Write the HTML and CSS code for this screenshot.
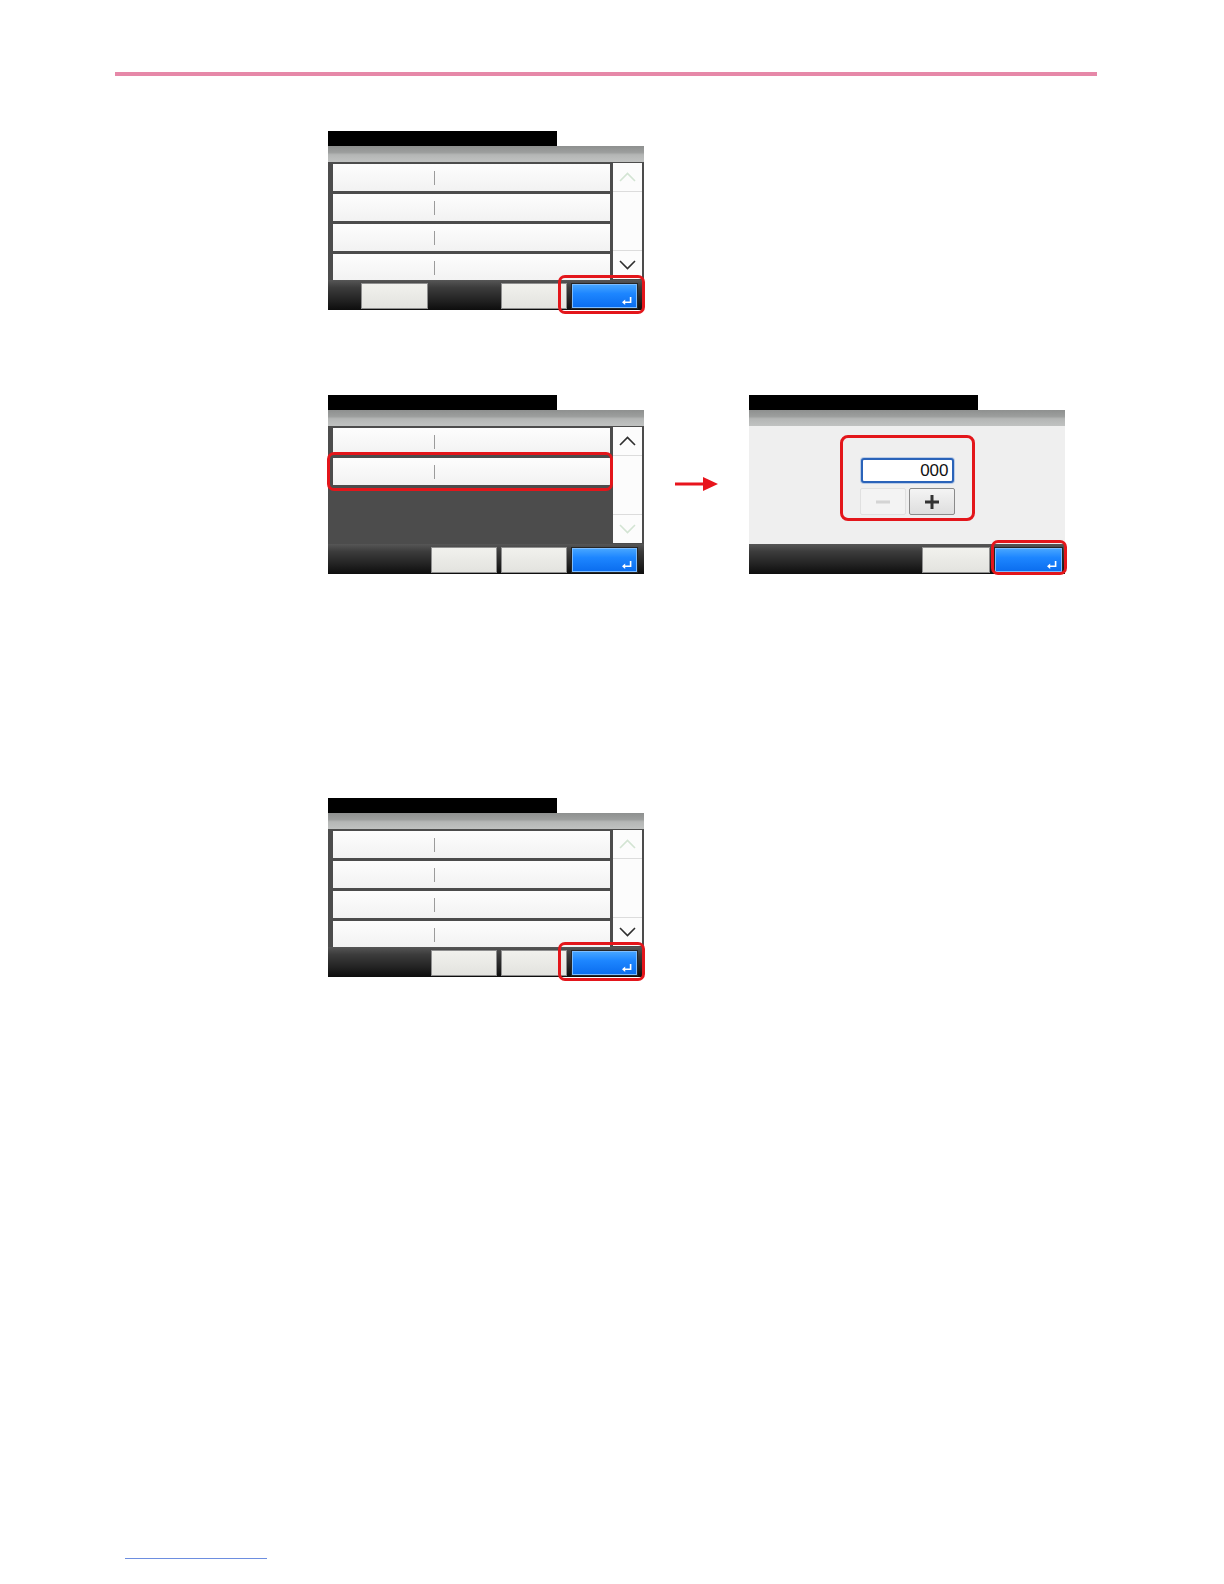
FILE: index.html
```html
<!DOCTYPE html>
<html lang="en">
<head>
<meta charset="utf-8">
<title>Panel steps</title>
<link rel="stylesheet" href="styles.css">
</head>
<body>
<div class="page">
  <div class="rule"></div>

  <!-- Figure 1 -->
  <div class="fig fig-1">
    <div class="screen">
      <div class="title"></div>
      <div class="subbar"></div>
      <div class="list">
        <div class="rows">
          <div class="row"><span class="row-key"></span><span class="row-val"></span></div>
          <div class="row"><span class="row-key"></span><span class="row-val"></span></div>
          <div class="row"><span class="row-key"></span><span class="row-val"></span></div>
          <div class="row"><span class="row-key"></span><span class="row-val"></span></div>
        </div>
        <div class="scroll">
          <div class="scroll-btn up"><svg class="chev faint" viewBox="0 0 17 10"><path d="M1 9 L8.5 1.5 L16 9"/></svg></div>
          <div class="scroll-track"></div>
          <div class="scroll-btn down"><svg class="chev" viewBox="0 0 17 10"><path d="M1 1 L8.5 8.5 L16 1"/></svg></div>
        </div>
      </div>
      <div class="bar">
        <div class="btn btn-first"></div>
        <div class="btn"></div>
        <div class="btn btn-blue"><svg class="enter" viewBox="0 0 10 8"><path d="M8.6 0 V5.2 H2.5"/><polygon points="0,5.2 3.2,2.4 3.2,8"/></svg></div>
        <div class="hl hl-bar"></div>
      </div>
    </div>
  </div>

  <!-- Figure 2 -->
  <div class="fig fig-2">
    <div class="screen">
      <div class="title"></div>
      <div class="subbar"></div>
      <div class="list">
        <div class="rows rows-open">
          <div class="row"><span class="row-key"></span><span class="row-val"></span></div>
          <div class="row"><span class="row-key"></span><span class="row-val"></span><div class="hl hl-row"></div></div>
        </div>
        <div class="scroll">
          <div class="scroll-btn up"><svg class="chev" viewBox="0 0 17 10"><path d="M1 9 L8.5 1.5 L16 9"/></svg></div>
          <div class="scroll-track"></div>
          <div class="scroll-btn down"><svg class="chev faint" viewBox="0 0 17 10"><path d="M1 1 L8.5 8.5 L16 1"/></svg></div>
        </div>
      </div>
      <div class="bar">
        <div class="btn"></div>
        <div class="btn"></div>
        <div class="btn btn-blue"><svg class="enter" viewBox="0 0 10 8"><path d="M8.6 0 V5.2 H2.5"/><polygon points="0,5.2 3.2,2.4 3.2,8"/></svg></div>
      </div>
    </div>

    <svg class="next-arrow" viewBox="0 0 43 14"><rect x="0" y="5.5" width="30" height="3"/><polygon points="28,0 43,7 28,14"/></svg>

    <div class="screen">
      <div class="title"></div>
      <div class="subbar"></div>
      <div class="panel">
        <div class="numbox">
          <div class="num-input">000</div>
          <div class="num-btns">
            <div class="num-btn num-btn-off"><svg viewBox="0 0 16 16"><rect x="1" y="6.5" width="14" height="3"/></svg></div>
            <div class="num-btn"><svg viewBox="0 0 16 16"><rect x="1" y="6.5" width="14" height="3"/><rect x="6.5" y="1" width="3" height="14"/></svg></div>
          </div>
        </div>
      </div>
      <div class="bar bar-wide">
        <div class="btn"></div>
        <div class="btn btn-blue"><svg class="enter" viewBox="0 0 10 8"><path d="M8.6 0 V5.2 H2.5"/><polygon points="0,5.2 3.2,2.4 3.2,8"/></svg></div>
        <div class="hl hl-bar-wide"></div>
      </div>
    </div>
  </div>

  <!-- Figure 3 -->
  <div class="fig fig-3">
    <div class="screen">
      <div class="title"></div>
      <div class="subbar"></div>
      <div class="list">
        <div class="rows">
          <div class="row"><span class="row-key"></span><span class="row-val"></span></div>
          <div class="row"><span class="row-key"></span><span class="row-val"></span></div>
          <div class="row"><span class="row-key"></span><span class="row-val"></span></div>
          <div class="row"><span class="row-key"></span><span class="row-val"></span></div>
        </div>
        <div class="scroll">
          <div class="scroll-btn up"><svg class="chev faint" viewBox="0 0 17 10"><path d="M1 9 L8.5 1.5 L16 9"/></svg></div>
          <div class="scroll-track"></div>
          <div class="scroll-btn down"><svg class="chev" viewBox="0 0 17 10"><path d="M1 1 L8.5 8.5 L16 1"/></svg></div>
        </div>
      </div>
      <div class="bar">
        <div class="btn"></div>
        <div class="btn"></div>
        <div class="btn btn-blue"><svg class="enter" viewBox="0 0 10 8"><path d="M8.6 0 V5.2 H2.5"/><polygon points="0,5.2 3.2,2.4 3.2,8"/></svg></div>
        <div class="hl hl-bar"></div>
      </div>
    </div>
  </div>

  <div class="foot-link"></div>
</div>
</body>
</html>
```

FILE: styles.css
```css
* { box-sizing: border-box; }

body {
  margin: 0;
  background: #ffffff;
  font-family: "Liberation Sans", Arial, sans-serif;
}

.page {
  width: 1224px;
  min-height: 1584px;
  padding-top: 72px;
  overflow: hidden;
}

.rule {
  width: 982px;
  height: 4px;
  margin-left: 115px;
  background: #e688a8;
}

.fig { margin-left: 328px; }
.fig-1 { margin-top: 55px; }
.fig-2 { margin-top: 85px; display: flex; align-items: flex-start; }
.fig-3 { margin-top: 224px; }

.screen {
  position: relative;
  width: 316px;
  flex: none;
}

.title {
  width: 229px;
  height: 15px;
  background: #000;
}

.subbar {
  height: 16px;
  background: linear-gradient(#8e908f 0%, #9c9e9d 40%, #b4b6b5 55%, #c0c2c1 100%);
}

.list {
  display: flex;
  height: 118px;
  background: #4c4c4c;
  padding: 0 2px 0 5px;
}

.rows {
  width: 277px;
  padding-top: 2px;
  display: flex;
  flex-direction: column;
  gap: 3px;
  overflow: hidden;
}

.rows-open { overflow: visible; }

.row {
  position: relative;
  flex: none;
  height: 27px;
  display: flex;
  align-items: center;
  background: linear-gradient(#fdfdfd, #f2f2f2);
}

.row-key { width: 101px; }

.row-val {
  flex: 1;
  height: 14px;
  border-left: 1px solid #9b9b9b;
}

.scroll {
  width: 29px;
  margin: 1px 0 1px 3px;
  background: #fcfcfc;
  display: flex;
  flex-direction: column;
}

.scroll-btn {
  height: 29px;
  display: flex;
  align-items: center;
  justify-content: center;
}

.scroll-btn.up { border-bottom: 1px solid #dcdcdc; }
.scroll-btn.down { border-top: 1px solid #dcdcdc; }
.scroll-track { flex: 1; }

.chev { width: 17px; height: 10px; }
.chev path { fill: none; stroke: #2f2f2f; stroke-width: 1.6; }
.chev.faint path { stroke: #d3e4d3; }

.bar {
  position: relative;
  height: 30px;
  display: flex;
  justify-content: flex-end;
  align-items: flex-start;
  gap: 4px;
  padding: 3px 6px 0 0;
  background: linear-gradient(#565656 0%, #3c3c3c 25%, #242424 65%, #0d0d0d 100%);
}

.bar-wide { padding-right: 2px; }

.btn {
  width: 66px;
  height: 26px;
  background: linear-gradient(#f1f1ed, #e3e3df);
  border: 1px solid #8f8f8f;
}

.btn-first { margin-right: auto; margin-left: 33px; width: 67px; }
.bar-wide .btn { width: 68px; }

.btn-blue,
.bar-wide .btn-blue {
  position: relative;
  width: 67px;
  border: 1px solid #262626;
  box-shadow: inset 0 0 0 1px #7dbdff;
  background: linear-gradient(#4aa8ff 0%, #1d86ff 40%, #0a6cee 100%);
}

.bar-wide .btn-blue { width: 69px; }

.enter {
  position: absolute;
  right: 5px;
  bottom: 3px;
  width: 10px;
  height: 8px;
}

.enter path { fill: none; stroke: #fff; stroke-width: 1.6; }
.enter polygon { fill: #fff; }

.hl {
  position: absolute;
  border: 3px solid #e3161b;
  border-radius: 7px;
  pointer-events: none;
  z-index: 2;
}

.hl-bar { left: 230px; top: -5px; width: 87px; height: 39px; }
.hl-bar-wide { left: 242px; top: -4px; width: 76px; height: 35px; }
.hl-row { left: -6px; right: -3px; top: -6px; bottom: -6px; }

.next-arrow {
  flex: none;
  width: 43px;
  height: 14px;
  margin: 82px 31px 0 31px;
}

.next-arrow rect,
.next-arrow polygon { fill: #e8141c; }

.panel {
  height: 118px;
  background: #efefef;
  padding-top: 9px;
}

.numbox {
  width: 135px;
  height: 86px;
  margin: 0 auto;
  border: 3px solid #e3161b;
  border-radius: 8px;
  padding-top: 20px;
  display: flex;
  flex-direction: column;
  align-items: center;
}

.num-input {
  width: 93px;
  height: 25px;
  background: #fff;
  border: 2px solid #2a63b9;
  border-radius: 3px;
  box-shadow: 0 0 0 1px #b9cbe6;
  text-align: right;
  padding-right: 3px;
  font-size: 17px;
  line-height: 21px;
  color: #111;
}

.num-btns {
  display: flex;
  gap: 3px;
  margin-top: 5px;
}

.num-btn {
  width: 46px;
  height: 27px;
  display: flex;
  align-items: center;
  justify-content: center;
  border: 1px solid #8a8a8a;
  border-radius: 2px;
  background: linear-gradient(#f4f4f4, #dedede);
}

.num-btn svg { width: 16px; height: 16px; }
.num-btn svg rect { fill: #333; }

.num-btn-off {
  border-color: #e0e0e0;
  background: #f3f3f3;
}

.num-btn-off svg rect { fill: #d4d4d4; }

.foot-link {
  width: 142px;
  height: 1px;
  margin: 581px 0 0 125px;
  background: #6d8ee0;
}
```
